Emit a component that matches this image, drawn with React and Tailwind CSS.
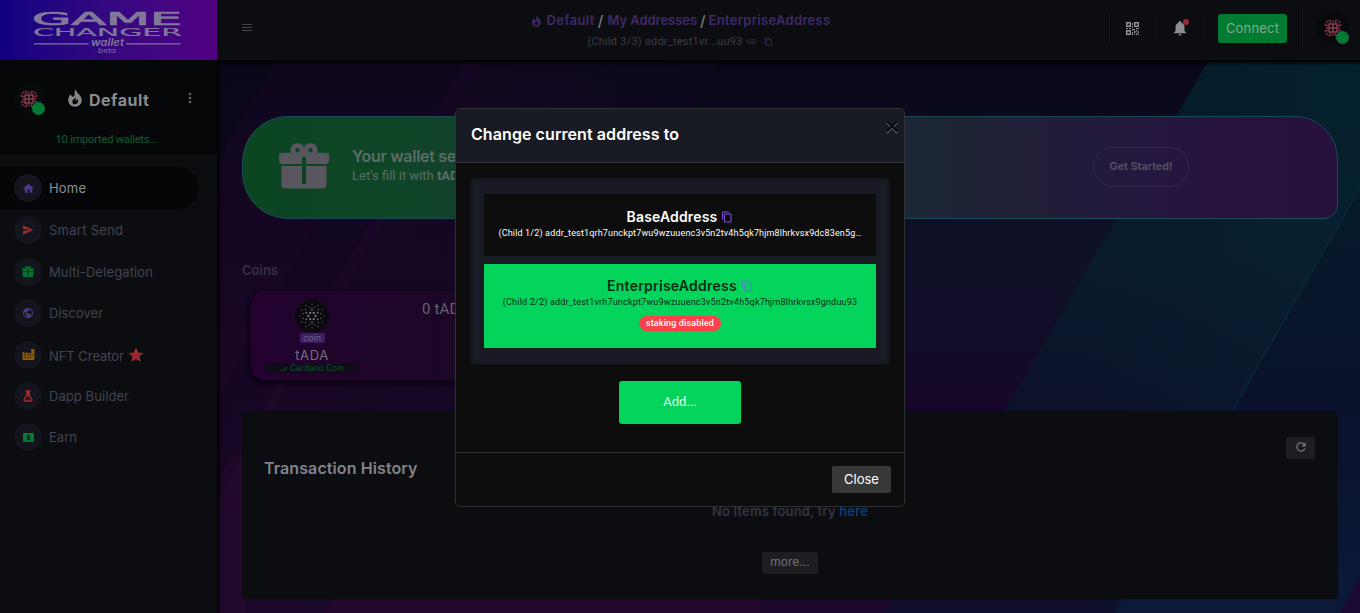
import React from "react";
import { MdHome, MdSend, MdPublic, MdStar, MdNotifications, MdContentCopy, MdLink, MdMoreVert, MdRefresh, MdDoneAll } from "react-icons/md";

function Gift({ className }) {
  return (
    <svg viewBox="0 0 50 46" className={className} fill="currentColor">
      <path fillRule="evenodd" d="M18.500 0a7 7 0 1 0 0 14a7 7 0 1 0 0-14zM18.500 5a2.200 2.200 0 1 1 0 4.400a2.200 2.200 0 1 1 0-4.400z" />
      <path fillRule="evenodd" d="M31.500 0a7 7 0 1 0 0 14a7 7 0 1 0 0-14zM31.500 5a2.200 2.200 0 1 1 0 4.400a2.200 2.200 0 1 1 0-4.400z" />
      <path d="M3 9.800h44a3 3 0 0 1 3 3v5.200a3 3 0 0 1-3 3H27v-7h-4v7H3a3 3 0 0 1-3-3v-5.200a3 3 0 0 1 3-3z" />
      <path d="M2.500 23H23v18h4V23h20.500v19a3.500 3.500 0 0 1-3.500 3.500H6A3.500 3.500 0 0 1 2.500 42z" />
    </svg>
  );
}

function Flame({ className }) {
  return (
    <svg viewBox="0 0 14 18" className={className} fill="currentColor">
      <path fillRule="evenodd" d="M7.500 0C8 2.800 10 4.200 11.700 6.300C13 8 13.800 9.600 13.800 11.300C13.800 15 11 17.700 7 17.700S.2 15 .2 11.300C.2 8.600 1.400 6.500 3 4.900C3 6.600 3.600 7.700 5 7.700C7.600 7.700 6 3.500 7.500 0zM8 7.800C7.600 9.800 4.300 9.900 4.300 12.700C4.300 14.300 5.500 15.300 6.900 15.300C9 15.300 10.100 13.800 10.100 12C10.100 11.200 9.900 10.400 9.500 9.800C9.200 11.500 8.300 11.700 7.700 11.400C7 10.900 8.200 9.300 8 7.800z" />
    </svg>
  );
}

function Factory({ className }) {
  return (
    <svg viewBox="0 0 24 24" className={className} fill="currentColor">
      <path fillRule="evenodd" d="M1 22V8h2l4 3V8h2l4 3V8l4 3V2h6v20zM4 12v2h3v-2zm5 0v2h3v-2zm5 0v2h3v-2zm-10 5v2h3v-2zm5 0v2h3v-2zm5 0v2h3v-2zm5-5v2h2v-2z" />
    </svg>
  );
}

function Flask({ className }) {
  return (
    <svg viewBox="0 0 24 24" className={className}>
      <path d="M7 2h10M9.500 3v7L4 19.500Q3.500 22 6 22h12q2.500 0 2-2.500L14.500 10V3" fill="none" stroke="currentColor" strokeWidth="2.600" />
      <path d="M9.500 3h5v7l2.500 4.500-3 .5-4-4z" fill="currentColor" />
      <path d="M8 18h2m3 1h3" stroke="currentColor" strokeWidth="1.600" />
    </svg>
  );
}

function Banknote({ className }) {
  return (
    <svg viewBox="0 0 11 9" className={className}>
      <rect width="11" height="9" rx="1" fill="currentColor" />
      <path d="M7 2.500H4.500v2h2v2H4M5.500 1.800v5.400" fill="none" stroke="#0f1613" strokeWidth=".9" />
    </svg>
  );
}

function QrIcon() {
  return (
    <svg viewBox="0 0 13 13" className="h-[13px] w-[13px] text-[#929395]" fill="currentColor">
      <path fillRule="evenodd" d="M0 0h5v5H0zM1.400 1.400v2.200h2.200V1.400zM8 0h5v5H8zM9.400 1.400v2.200h2.200V1.400zM0 8h5v5H0zM1.400 9.400v2.200h2.200V9.400z" />
      <path d="M6 1h1v2H6zM6 4h1v2H6zM0 6h2v1H0zM3 6h2v1H3zM6 7h3v1.300H6zM10 6h3v1h-3zM8 9h1.500v2H8zM6 10h1v3H6zM10 8h1.400v1.400H10zM11.600 9.400H13v1.600h-1.400zM10 11.300h1.300V13H10zM12 12h1v1h-1zM8 12h1v1H8z" />
    </svg>
  );
}

function ChipAvatar() {
  return (
    <svg viewBox="0 0 18 18" className="h-[18px] w-[18px]">
      <g stroke="#78303f" strokeWidth="1.500" fill="none">
        <path d="M5 5h8v8H5zM9 5v8M5 9h8" stroke="#84404d" />
        <path d="M1.500 7V4L4 1.500h3M11 1.500h3L16.500 4v3M16.500 11v3L14 16.500h-3M7 16.500H4L1.500 14v-3" strokeDasharray="2.600 1" />
        <path d="M2 9h2M14 9h2M9 1.500v2M9 14.500v2M6.500 2v2M11.500 2v2M6.500 14v2M11.500 14v2M2 6.500h2M14 6.500h2M2 11.500h2M14 11.500h2" />
      </g>
    </svg>
  );
}

function Avatar() {
  return (
    <div className="relative flex h-8 w-8 items-center justify-center rounded-full bg-[#08090c]">
      <ChipAvatar />
      <span className="absolute left-[19px] top-[19px] h-[13px] w-[13px] rounded-full bg-[#027a33]" />
    </div>
  );
}

function Logo() {
  return (
    <svg viewBox="0 0 217 60" className="h-[60px] w-[217px]">
      <g fill="#80779b" stroke="#80779b" fontFamily="'DejaVu Sans', sans-serif">
        <text x="32" y="24.500" fontSize="18" textLength="150" lengthAdjust="spacingAndGlyphs" strokeWidth=".7" strokeLinejoin="miter">GAME</text>
        <text x="33" y="35.800" fontSize="11" textLength="149" lengthAdjust="spacingAndGlyphs" strokeWidth=".2">CHANGER</text>
        <path d="M34 43.200h54.500v1.300H34zM126 43.200h54.500v1.300H126z" stroke="none" />
        <g stroke="none" fontFamily="Inter, sans-serif" fontStyle="italic">
          <text x="91" y="46.300" fontSize="10" fontWeight="600" textLength="33" lengthAdjust="spacingAndGlyphs">wallet</text>
          <text x="98" y="53" fontSize="6" textLength="18" lengthAdjust="spacingAndGlyphs">beta</text>
        </g>
      </g>
    </svg>
  );
}

const RINGS = [
  { n: 6, r: 3.6, s: 1.2, o: 0 },
  { n: 6, r: 6.6, s: 0.9, o: 0.52 },
  { n: 12, r: 9, s: 0.65, o: 0.26 },
  { n: 6, r: 11.8, s: 0.6, o: 0.52 },
  { n: 6, r: 12, s: 0.6, o: 0 },
];

function CardanoLogo() {
  return (
    <svg viewBox="-17 -17 34 34" className="h-[34px] w-[34px]">
      <circle r="17" fill="#0c0910" />
      {RINGS.map((g, i) =>
        Array.from({ length: g.n }, (_, k) => {
          const a = (k * 2 * Math.PI) / g.n + g.o;
          return <circle key={`${i}-${k}`} cx={g.r * Math.cos(a)} cy={g.r * Math.sin(a)} r={g.s} fill="#737076" />;
        })
      )}
    </svg>
  );
}

function Backdrop() {
  return (
    <svg viewBox="217 60 1143 553" className="absolute inset-0 h-full w-full" preserveAspectRatio="none">
      <defs>
        <linearGradient id="base" x1="0" y1="0" x2="0" y2="1">
          <stop offset="0" stopColor="#090818" />
          <stop offset="1" stopColor="#170829" />
        </linearGradient>
        <linearGradient id="violet" x1="0" y1="0" x2="0" y2="1">
          <stop offset="0" stopColor="#10061e" />
          <stop offset="1" stopColor="#1c0829" />
        </linearGradient>
        <linearGradient id="plum" x1="0" y1="0" x2="1" y2="0">
          <stop offset="0" stopColor="#21072a" />
          <stop offset="1" stopColor="#0e0824" />
        </linearGradient>
        <linearGradient id="navy" x1="0" y1="0" x2="0" y2="1">
          <stop offset="0" stopColor="#090818" />
          <stop offset=".35" stopColor="#0d1128" />
          <stop offset=".65" stopColor="#180628" />
          <stop offset="1" stopColor="#1c082c" />
        </linearGradient>
        <linearGradient id="teal" x1="0" y1="0" x2="0" y2="1">
          <stop offset="0" stopColor="#051a27" />
          <stop offset=".35" stopColor="#081b2c" />
          <stop offset=".65" stopColor="#0d102a" />
          <stop offset="1" stopColor="#0f0e2c" />
        </linearGradient>
        <linearGradient id="tealGlow" x1="0" y1="0" x2="1" y2="0">
          <stop offset=".4" stopColor="#032533" stopOpacity="0" />
          <stop offset="1" stopColor="#042734" />
        </linearGradient>
        <linearGradient id="corner" x1="0" y1="0" x2="0" y2="1">
          <stop offset="0" stopColor="#061a2b" />
          <stop offset=".5" stopColor="#0a112b" />
          <stop offset="1" stopColor="#0a1a38" />
        </linearGradient>
      </defs>
      <rect x="217" y="60" width="1143" height="553" fill="url(#base)" />
      <path d="M277 60H480L217 500V160z" fill="url(#violet)" />
      <path d="M467 60H760L440 613H217V480z" fill="url(#plum)" opacity=".5" />
      <path d="M372 220L250 430 217 480V400L318 220z" fill="#0c0722" opacity=".3" />
      <path d="M217 502L245 450V613H217z" fill="#2a0830" opacity=".5" />
      <path d="M720 60H1209L886 613H400z" fill="url(#navy)" />
      <path d="M325 613L335 596H760V613z" fill="#25072c" />
      <path d="M1209 60H1360V190L1115 613H886z" fill="url(#teal)" />
      <path d="M1209 60H1360V190L1115 613H886z" fill="url(#tealGlow)" opacity=".45" />
      <path d="M1360 190V613H1115z" fill="url(#corner)" />
      <path d="M1360 188L1228 418" stroke="#082836" strokeWidth="1.500" />
      <path d="M1360 575V613H1340z" fill="#180a30" />
    </svg>
  );
}

const NAV = [
  { label: "Home", box: "h-[42px] rounded-r-full bg-[#050507] w-[199px]", text: "text-[#8c8d90] tracking-[0.19px]", icon: <MdHome className="h-[13px] w-[13px] text-[#4e378e]" /> },
  { label: "Smart Send", box: "h-[42px]", text: "text-[#42444f] tracking-[0.27px]", icon: <MdSend className="h-3 w-3 text-[#a02b31]" /> },
  { label: "Multi-Delegation", box: "h-[41px]", text: "text-[#42444f] tracking-[0.13px]", icon: <Gift className="h-[11px] w-3 text-[#04712f]" /> },
  { label: "Discover", box: "h-[42px]", text: "text-[#42444f] tracking-[0.02px]", icon: <MdPublic className="h-3 w-3 text-[#4e378e]" /> },
  { label: "NFT Creator", box: "h-[41px]", text: "text-[#42444f] tracking-[-0.05px] pt-[2px]", icon: <Factory className="h-[13px] w-[13px] text-[#8c5d0a]" />, star: true },
  { label: "Dapp Builder", box: "h-[41px]", text: "text-[#42444f] tracking-[0.07px]", icon: <Flask className="h-3 w-3 text-[#a02b31]" /> },
  { label: "Earn", box: "h-[42px]", text: "text-[#42444f] tracking-[0.04px]", icon: <Banknote className="h-[9px] w-[11px] text-[#057a38]" /> },
];

function Sidebar() {
  return (
    <aside className="relative z-10 flex w-[217px] shrink-0 flex-col bg-[#0c0d11] shadow-[1px_0_4px_1px_#000]">
      <div className="h-[60px] bg-linear-to-r from-[#110080] to-[#520080]">
        <Logo />
      </div>
      <div className="flex h-[94px] flex-col border-b border-black bg-[#060709]">
        <div className="flex items-start pl-[13px] pt-[23px]">
          <Avatar />
          <Flame className="ml-[23px] mt-[6px] h-[18px] w-[14px] text-[#87888a]" />
          <span className="ml-[7px] mt-px text-[16px] font-bold leading-8 tracking-[0.5px] text-[#8b8c8e]">Default</span>
          <MdMoreVert className="ml-[33px] mt-[7px] h-4 w-4 text-[#60616a]" />
        </div>
        <div className="mt-[16px] pr-[4px] text-center font-['Roboto'] text-[11px] leading-4 tracking-[-0.17px] text-[#0b6232]">10 imported wallets...</div>
      </div>
      <nav className="mt-[13px] flex flex-col">
        {NAV.map((n) => (
          <div key={n.label} className={`flex items-center pl-[14px] ${n.box}`}>
            <span className="flex h-7 w-7 items-center justify-center rounded-full bg-[#14151c]">{n.icon}</span>
            <span className={`ml-[7px] text-[13px] leading-5 ${n.text}`}>{n.label}</span>
            {n.star && <MdStar className="ml-[3px] h-[18px] w-[18px] text-[#9c2930]" />}
          </div>
        ))}
      </nav>
    </aside>
  );
}

function Header() {
  return (
    <header className="relative z-10 flex h-[60px] shrink-0 bg-[#0c0d11] shadow-[4px_2px_3px_1px_#000]">
      <svg viewBox="0 0 10 7" className="ml-[25px] mt-6 h-[7px] w-[10px]">
        <path d="M0 .5h10M0 3.500h10M0 6.500h10" stroke="#44464f" />
      </svg>
      <div className="ml-[181px] flex w-[496px] flex-col items-center pt-[11px]">
        <div className="flex items-center whitespace-nowrap text-[13px] font-semibold leading-[19px] text-[#3f2a69]">
          <Flame className="mr-[6px] h-3 w-[9px]" />
          <span className="tracking-[0.4px]">Default</span>
          <span className="ml-[3px] mr-1 text-[15px] font-medium text-[#7c7c78]">/</span>
          <span className="tracking-[-0.05px]">My Addresses</span>
          <span className="ml-[3px] mr-[3px] text-[15px] font-medium text-[#7c7c78]">/</span>
          <span className="tracking-[0.3px]">EnterpriseAddress</span>
        </div>
        <div className="flex items-center whitespace-nowrap pr-[2px] pt-[4px] font-['Roboto'] text-[11px] leading-[15px] tracking-[0.22px] text-[#3b3d47]">
          <span>(Child 3/3) addr_test1vr...uu93</span>
          <MdLink className="ml-[3px] h-[11px] w-[11px] text-[#3f2a69]" />
          <MdContentCopy className="ml-[7px] h-[9px] w-[9px] text-[#3f2a69]" />
        </div>
      </div>
      <div className="ml-[180px] mt-3 flex h-8 items-center">
        <div className="flex h-full w-[47px] items-center justify-center border-l border-[#17181c] pr-px"><QrIcon /></div>
        <div className="relative flex h-full w-[47px] items-center justify-center border-l border-[#17181c]">
          <MdNotifications className="h-[18px] w-[18px] text-[#8d8e90]" />
          <span className="absolute left-[26px] top-[7px] h-[6px] w-[6px] rounded-full bg-[#982a32]" />
        </div>
        <div className="h-full w-[15px] border-l border-[#17181c]" />
        <button className="h-[29px] w-[69px] rounded-[3px] bg-[#017a32] pt-px text-[13px] tracking-[0.18px] text-[#83aa91]">Connect</button>
      </div>
      <div className="ml-[15px] mt-2 flex h-10 items-center border-l border-[#17181c] pl-[14px]">
        <Avatar />
      </div>
    </header>
  );
}

function Content() {
  return (
    <main className="relative flex-1">
      <Backdrop />
      <div className="relative flex flex-col pl-[25px] pr-[22px] pt-[56px]">
        <section className="flex h-[103px] items-center rounded-bl-[46px] rounded-br-[14px] rounded-tl-[46px] rounded-tr-[43px] border border-[#1b4a56] bg-[linear-gradient(90deg,#0c4522_0%,#0f4528_15%,#163b2e_27%,#1a2b33_55%,#1e2136_68%,#26163f_85%,#27113d_100%)] pl-9">
          <Gift className="mb-[4px] h-[46px] w-[50px] text-[#595660]" />
          <div className="ml-[23px] flex w-[741px] flex-col pb-[3px]">
            <span className="text-[16px] font-semibold leading-[19px] tracking-[-0.3px] text-[#5f6b67]">Your wallet seems empty</span>
            <span className="font-['Roboto'] text-[13px] leading-[19px] text-[#5f6b67]">Let&rsquo;s fill it with <b>tADA</b></span>
          </div>
          <button className="mb-px h-10 w-24 rounded-full border border-[#37274b] pb-px text-[11px] font-semibold tracking-[-0.1px] text-[#5b5166]">Get Started!</button>
        </section>
        <h4 className="mt-[41px] text-[13px] font-semibold leading-5 text-[#343246]">Coins</h4>
        <section className="ml-[8px] mt-[10px] flex h-[91px] w-[440px] rounded-2xl border border-[#13041c] bg-linear-to-r from-[#240230] to-[#120a1c] shadow-[0_2px_4px_1px_rgba(0,0,0,0.6)]">
          <div className="ml-[14px] flex w-[94px] flex-col items-center pt-[8px]">
            <CardanoLogo />
            <span className="z-10 h-[10px] w-[25px] rounded-[2px] bg-[#3b1f62] text-center text-[9px] italic leading-[10px] text-[#736288]">coin</span>
            <span className="mt-[3px] text-[13px] leading-[18px] tracking-[0.6px] text-[#76717e]">tADA</span>
            <span className="-mt-px flex h-[11px] w-[92px] items-center justify-center gap-[2px] rounded-[2px] bg-[#110a1a] font-['Roboto'] text-[9px] leading-[11px] text-[#0d4f2f]">
              <MdDoneAll className="h-2 w-2" />Cardano Coin
            </span>
          </div>
          <span className="ml-[63px] mt-[8px] font-['Roboto'] text-[15px] leading-5 tracking-[0.14px] text-[#67606f]">0 tADA</span>
        </section>
        <section className="mt-[30px] flex h-[188px] flex-col rounded-[4px] bg-[#0c0d11]">
          <div className="flex justify-between pl-[22px] pr-[23px] pt-[26px]">
            <h3 className="mt-[21px] text-[16px] font-semibold leading-5 tracking-[0.1px] text-[#828387]">Transaction History</h3>
            <button className="flex h-[22px] w-[29px] items-center justify-center rounded-[2px] bg-[#1d1e22] pb-[2px] text-[#77787b]"><MdRefresh className="h-[14px] w-[14px]" /></button>
          </div>
          <p className="mt-[23px] text-center text-[13px] font-semibold leading-5 tracking-[0.17px] text-[#343540]">No Items found, try <span className="text-[#063f7e]">here</span></p>
          <button className="mx-auto mt-[31px] h-[22px] w-14 rounded-[2px] bg-[#1d1e22] pb-[2px] text-[12px] leading-5 text-[#6f7073]">more...</button>
        </section>
      </div>
    </main>
  );
}

function CloseMark() {
  return (
    <svg viewBox="0 0 12 14" className="h-[14px] w-3" fill="none">
      <path d="M1 3l10 10M11 3L1 13" stroke="#77787c" strokeWidth="1.300" />
      <path d="M1 1.500l10 10M11 1.500L1 11.500" stroke="#08090c" strokeWidth="2" />
    </svg>
  );
}

function Modal() {
  return (
    <div className="absolute inset-0 z-20 flex items-start justify-center pt-[108px]">
      <div className="flex h-[399px] w-[450px] flex-col overflow-hidden rounded-[5px] border border-[#303136] bg-[#0d0d0d]">
        <div className="flex h-[54px] shrink-0 items-start justify-between border-b border-[#333439] bg-[#191b24] pl-[15px] pr-[6px]">
          <h2 className="mt-[15px] text-[16px] font-semibold leading-5 tracking-[0.08px] text-white">Change current address to</h2>
          <span className="mt-[11px]"><CloseMark /></span>
        </div>
        <div className="flex h-[290px] shrink-0 flex-col items-center border-b border-[#333333] pt-[15px]">
          <div className="flex w-[420px] flex-col gap-2 rounded-[2px] border border-[#13141a] bg-[#191b24] px-[13px] pb-4 pt-[15px] shadow-[inset_0_0_3px_#12131a]">
            <div className="flex h-[62px] flex-col items-center bg-[#0d0d0d] pt-[14px] text-white">
              <div className="flex items-center text-[14px] font-semibold leading-[18px] tracking-[0.15px]">BaseAddress<MdContentCopy className="ml-1 h-3 w-3 text-[#7c52d9]" /></div>
              <div className="whitespace-nowrap font-['Roboto'] text-[9px] leading-[14px] tracking-[0.16px]">(Child 1/2) addr_test1qrh7unckpt7wu9wzuuenc3v5n2tv4h5qk7hjm8lhrkvsx9dc83en5g…</div>
            </div>
            <div className="flex h-[84px] flex-col items-center bg-[#03d45b] pt-[13px] text-[#052e14]">
              <div className="flex items-center text-[14px] font-semibold leading-[18px] tracking-[0.24px]">EnterpriseAddress<MdContentCopy className="ml-1 h-3 w-3 text-[#3c93ac]" /></div>
              <div className="whitespace-nowrap font-['Roboto'] text-[9px] leading-[14px] tracking-[0.2px]">(Child 2/2) addr_test1vrh7unckpt7wu9wzuuenc3v5n2tv4h5qk7hjm8lhrkvsx9gnduu93</div>
              <span className="mt-[7px] h-[15px] w-[82px] rounded-full bg-[#fb424a] text-center font-['Roboto'] text-[9px] font-medium leading-[15px] tracking-[0.14px] text-white">staking disabled</span>
            </div>
          </div>
          <button className="mt-[16px] h-[43px] w-[122px] rounded-[3px] bg-[#03d45b] pb-px font-['Roboto'] text-[13px] text-[#e6fbee]">Add...</button>
        </div>
        <div className="flex justify-end pr-[13px] pt-[13px]">
          <button className="h-[27px] w-[59px] rounded-[2px] bg-[#373938] text-[13px] text-white">Close</button>
        </div>
      </div>
    </div>
  );
}

export default function App() {
  return (
    <div className="relative flex h-[613px] w-[1360px] overflow-hidden bg-[#0c0d11] font-['Inter',sans-serif]">
      <Sidebar />
      <div className="flex flex-1 flex-col">
        <Header />
        <Content />
      </div>
      <Modal />
    </div>
  );
}
